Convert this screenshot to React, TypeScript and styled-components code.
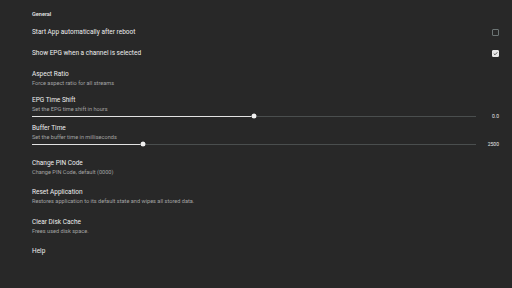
import React from "react";
import styled, { createGlobalStyle } from "styled-components";

const Global = createGlobalStyle`
  html, body { margin: 0; padding: 0; background: #282828; }
  body { font-family: Roboto, "Noto Sans", sans-serif; -webkit-font-smoothing: antialiased; }
  #root { width: 512px; height: 288px; overflow: hidden; }
`;

const Page = styled.div`
  width: 512px;
  height: 288px;
  box-sizing: border-box;
  padding: 10px 13px 0 32px;
  background: #282828;
  display: flex;
  flex-direction: column;
`;

const Header = styled.div`
  font-size: 5.6px;
  font-weight: 500;
  line-height: 8px;
  color: #ececec;
  margin-bottom: 3.5px;
`;

const Row = styled.div<{ $pt?: number; $pb?: number }>`
  display: flex;
  align-items: center;
  padding-top: ${(p) => p.$pt ?? 6}px;
  padding-bottom: ${(p) => p.$pb ?? 6}px;
`;

const Texts = styled.div`
  flex: 1;
  display: flex;
  flex-direction: column;
  min-width: 0;
`;

const Title = styled.div`
  font-size: 6.5px;
  line-height: 9px;
  color: #eeeeee;
  white-space: nowrap;
`;

const Summary = styled.div`
  font-size: 5.6px;
  line-height: 8.5px;
  color: #a3a3a3;
  white-space: nowrap;
`;

const Box = styled.div<{ $checked?: boolean }>`
  width: 7px;
  height: 7px;
  box-sizing: border-box;
  border-radius: 1px;
  border: 1px solid ${(p) => (p.$checked ? "#e8e8e8" : "#6c7474")};
  background: ${(p) => (p.$checked ? "#e8e8e8" : "transparent")};
  display: flex;
  align-items: center;
  justify-content: center;
`;

const SliderLine = styled.div`
  display: flex;
  align-items: center;
  height: 5px;
`;

const Track = styled.div`
  position: relative;
  flex: 1;
  height: 1px;
  background: #4a4e4e;
`;

const Fill = styled.div`
  position: absolute;
  left: 0;
  top: 0;
  height: 1px;
  background: #e2e2e2;
`;

const Thumb = styled.div`
  position: absolute;
  top: 50%;
  width: 5px;
  height: 5px;
  border-radius: 50%;
  background: #f0f0f0;
  transform: translate(-50%, -50%);
  box-shadow: 0 0 0 0.5px rgba(0, 0, 0, 0.5);
`;

const Value = styled.div`
  width: 23px;
  text-align: right;
  font-size: 5px;
  line-height: 5px;
  color: #e6e6e6;
`;

const CheckRow = ({ title, checked }: { title: string; checked?: boolean }) => (
  <Row>
    <Texts>
      <Title>{title}</Title>
    </Texts>
    <Box $checked={checked}>
      {checked && (
        <svg width="5" height="5" viewBox="0 0 10 10">
          <path d="M1.5 5.2 L4 7.6 L8.6 2.6" fill="none" stroke="#3a3a3a" strokeWidth="1.6" />
        </svg>
      )}
    </Box>
  </Row>
);

const TextRow = ({ title, summary }: { title: string; summary?: string }) => (
  <Row>
    <Texts>
      <Title>{title}</Title>
      {summary && <Summary>{summary}</Summary>}
    </Texts>
  </Row>
);

const SliderRow = ({
  title,
  summary,
  ratio,
  value,
  pb,
}: {
  title: string;
  summary: string;
  ratio: number;
  value: string;
  pb: number;
}) => (
  <Row $pt={3} $pb={pb}>
    <Texts>
      <Title>{title}</Title>
      <Summary>{summary}</Summary>
      <SliderLine>
        <Track>
          <Fill style={{ width: `${ratio * 100}%` }} />
          <Thumb style={{ left: `${ratio * 100}%` }} />
        </Track>
        <Value>{value}</Value>
      </SliderLine>
    </Texts>
  </Row>
);

export default function App() {
  return (
    <>
      <Global />
      <Page>
        <Header>General</Header>
        <CheckRow title="Start App automatically after reboot" />
        <CheckRow title="Show EPG when a channel is selected" checked />
        <TextRow title="Aspect Ratio" summary="Force aspect ratio for all streams" />
        <SliderRow
          title="EPG Time Shift"
          summary="Set the EPG time shift in hours"
          ratio={0.5}
          value="0.0"
          pb={2.5}
        />
        <SliderRow
          title="Buffer Time"
          summary="Set the buffer time in milliseconds"
          ratio={0.25}
          value="2500"
          pb={6}
        />
        <TextRow title="Change PIN Code" summary="Change PIN Code, default (0000)" />
        <TextRow
          title="Reset Application"
          summary="Restores application to its default state and wipes all stored data."
        />
        <TextRow title="Clear Disk Cache" summary="Frees used disk space." />
        <TextRow title="Help" />
      </Page>
    </>
  );
}
